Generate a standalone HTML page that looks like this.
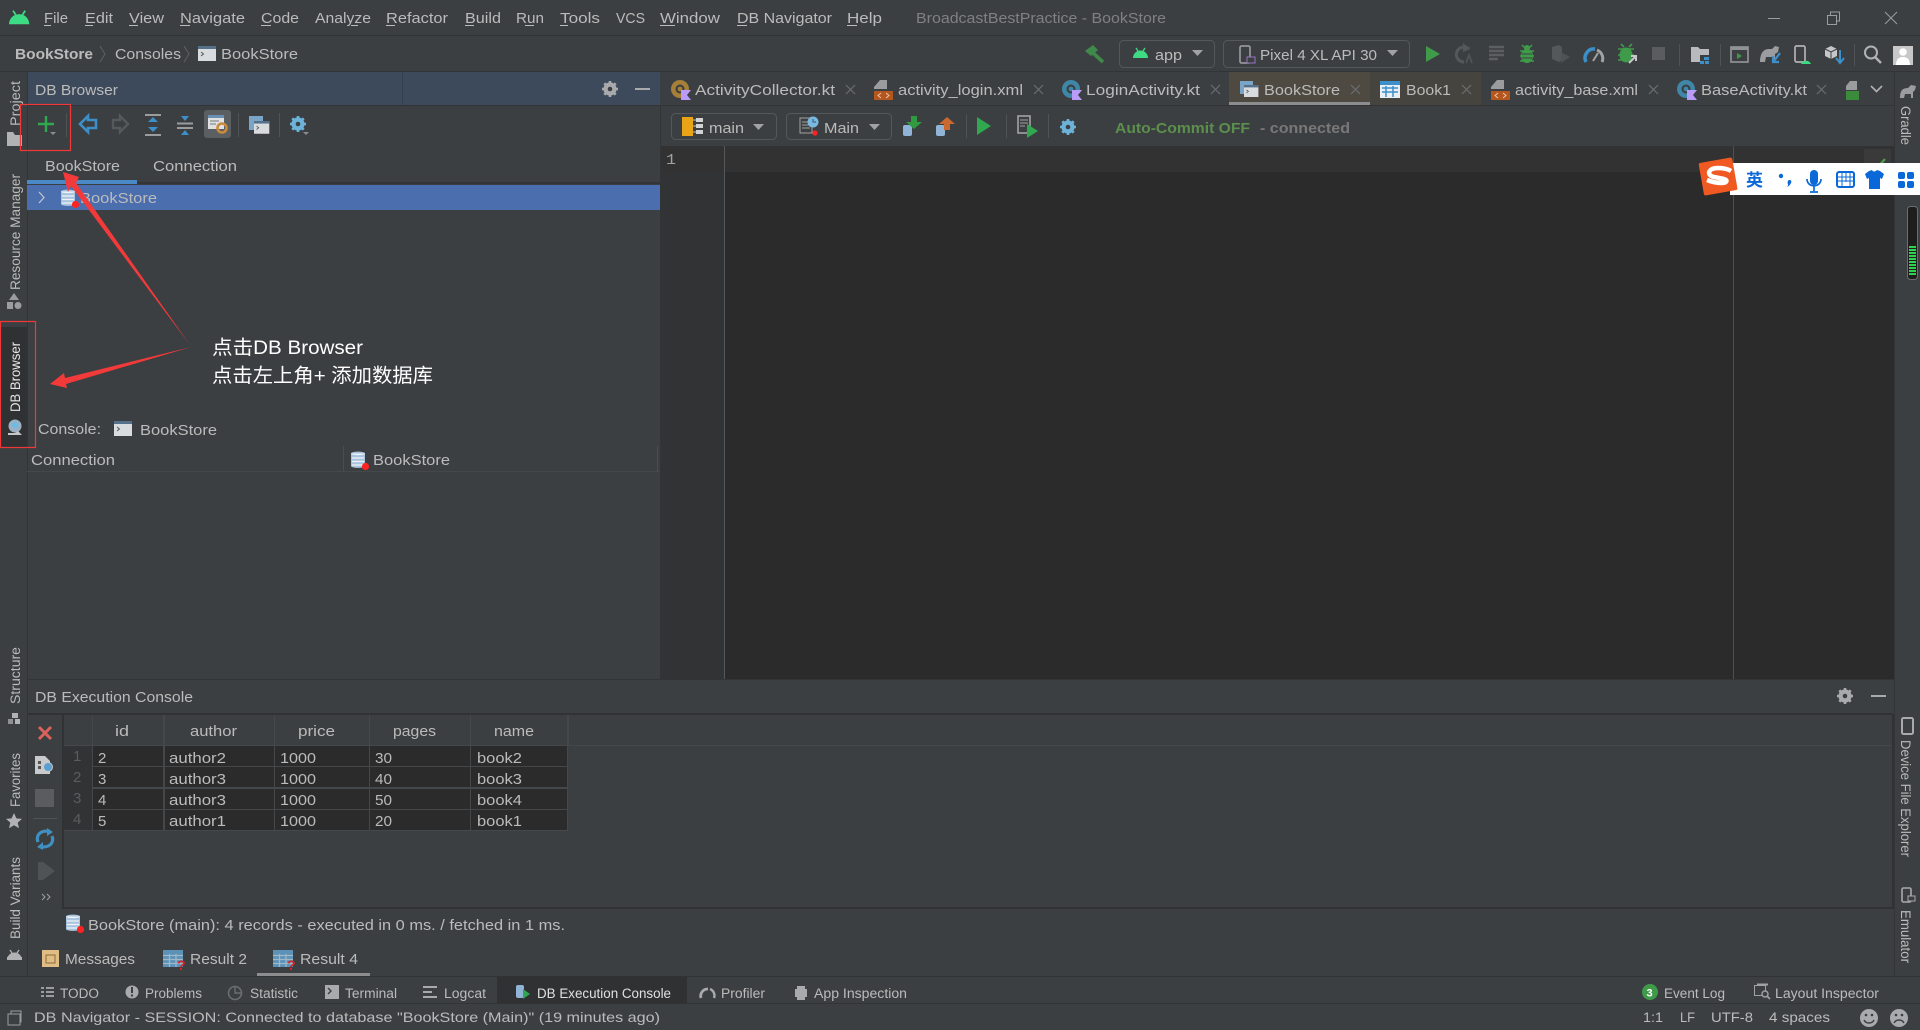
<!DOCTYPE html>
<html lang="zh">
<head>
<meta charset="utf-8">
<title>BroadcastBestPractice - BookStore</title>
<style>
html,body{margin:0;padding:0;background:#3c3f41;width:1920px;height:1030px;overflow:hidden}
svg{display:block}
text{font-family:"Liberation Sans","Noto Sans CJK SC",sans-serif;font-size:15px;fill:#bbbbbb}
.s{font-size:14px}
.b{font-size:13.5px}
.v{font-size:13.5px}
.m{font-size:15px;fill:#5a5d5f}
.dim{fill:#808080}
</style>
</head>
<body>
<svg width="1920" height="1030" viewBox="0 0 1920 1030" xmlns="http://www.w3.org/2000/svg">
<defs>
<g id="kt"><circle cx="9" cy="9" r="9"/><circle cx="9" cy="9" r="4.5" fill="#3c3f41"/><circle cx="9" cy="9" r="2.4" fill="currentColor"/><path d="M10 10h10l-4 5 4 5H10z" fill="#b99bf8"/></g>
<g id="xml"><path d="M6 0h7v9H0V7z" fill="#9a9c9e"/><rect x="0" y="11" width="19" height="9" fill="#b5561f"/><path d="M7 13l-3 2.5L7 18M12 13l3 2.5L12 18" fill="none" stroke="#e8c8a8" stroke-width="1"/></g>
<g id="db"><path d="M0 2.5C0 0 14 0 14 2.5V15c0 2.5-14 2.5-14 0z" fill="#a9c4de"/><path d="M0 2.5c0 2.2 14 2.2 14 0" fill="#eef4f9"/><path d="M1 7h12M1 10.5h12M1 14h12" stroke="#eef4f9" stroke-width="1.3"/><circle cx="14.5" cy="15.5" r="3.6" fill="#f22"/></g>
<g id="con"><rect x="0" y="0" width="18" height="15" fill="#d9dcdf"/><rect x="0" y="0" width="18" height="3" fill="#55708a"/><path d="M3 6l2.5 2L3 10" fill="none" stroke="#555" stroke-width="1"/></g>
<g id="x"><path d="M0 0l9 9M9 0L0 9" stroke="#6b6e70" stroke-width="1.2" fill="none"/></g>
<g id="android"><path d="M0 12a7.5 7.5 0 0 1 15 0z"/><path d="M3 2l2 3M12 2l-2 3" stroke="currentColor" stroke-width="1.3"/></g>
<g id="gear"><circle cx="8" cy="8" r="5" fill="none" stroke="currentColor" stroke-width="3.2"/><path d="M8 0v16M0 8h16M2.3 2.3l11.4 11.4M13.7 2.3L2.3 13.7" stroke="currentColor" stroke-width="2.6"/><circle cx="8" cy="8" r="2.3" fill="#3c3f41"/></g>
<g id="tbl"><rect width="20" height="17" fill="#5c92b8"/><path d="M0 5.5h20M0 9.5h20M0 13.5h20M6.5 4v13M13 4v13" stroke="#9fb8ca" stroke-width="1.2"/></g>
</defs>

<rect width="1920" height="1030" fill="#3c3f41"/>

<!-- title bar -->
<rect y="35" width="1920" height="1" fill="#323436"/>
<g fill="#3ddc84" color="#3ddc84" transform="translate(9,8) scale(1.35)"><use href="#android"/></g>
<text x="44" y="23" textLength="24" lengthAdjust="spacingAndGlyphs">File</text>
<text x="85" y="23" textLength="28" lengthAdjust="spacingAndGlyphs">Edit</text>
<text x="129" y="23" textLength="35" lengthAdjust="spacingAndGlyphs">View</text>
<text x="180" y="23" textLength="65" lengthAdjust="spacingAndGlyphs">Navigate</text>
<text x="261" y="23" textLength="38" lengthAdjust="spacingAndGlyphs">Code</text>
<text x="315" y="23" textLength="56" lengthAdjust="spacingAndGlyphs">Analyze</text>
<text x="386" y="23" textLength="62" lengthAdjust="spacingAndGlyphs">Refactor</text>
<text x="465" y="23" textLength="36" lengthAdjust="spacingAndGlyphs">Build</text>
<text x="516" y="23" textLength="28" lengthAdjust="spacingAndGlyphs">Run</text>
<text x="560" y="23" textLength="40" lengthAdjust="spacingAndGlyphs">Tools</text>
<text x="616" y="23" textLength="29" lengthAdjust="spacingAndGlyphs">VCS</text>
<text x="660" y="23" textLength="60" lengthAdjust="spacingAndGlyphs">Window</text>
<text x="737" y="23" textLength="95" lengthAdjust="spacingAndGlyphs">DB Navigator</text>
<text x="847" y="23" textLength="35" lengthAdjust="spacingAndGlyphs">Help</text>
<g fill="#bbbbbb">
<rect x="44" y="25" width="7" height="1"/><rect x="85" y="25" width="8" height="1"/><rect x="129" y="25" width="9" height="1"/><rect x="180" y="25" width="10" height="1"/><rect x="261" y="25" width="10" height="1"/><rect x="351" y="25" width="7" height="1"/><rect x="386" y="25" width="9" height="1"/><rect x="465" y="25" width="9" height="1"/><rect x="525" y="25" width="9" height="1"/><rect x="560" y="25" width="8" height="1"/><rect x="660" y="25" width="15" height="1"/><rect x="737" y="25" width="10" height="1"/><rect x="847" y="25" width="10" height="1"/>
</g>
<text class="dim" x="916" y="23" textLength="250" lengthAdjust="spacingAndGlyphs">BroadcastBestPractice - BookStore</text>
<g stroke="#9a9c9e" fill="none" stroke-width="1">
<path d="M1768 18.5h12"/>
<path d="M1827.5 15.5h9v9h-9zM1830.5 15v-3h9v9h-3"/>
<path d="M1885 12l12 12M1897 12l-12 12"/>
</g>

<!-- breadcrumb / main toolbar -->
<rect y="71" width="1920" height="1" fill="#323436"/>
<text x="15" y="59" textLength="78" lengthAdjust="spacingAndGlyphs" style="font-weight:bold">BookStore</text>
<path d="M100 46l5 8-5 8" fill="none" stroke="#5e6163"/>
<text x="115" y="59" textLength="66" lengthAdjust="spacingAndGlyphs">Consoles</text>
<path d="M184 46l5 8-5 8" fill="none" stroke="#5e6163"/>
<use href="#con" x="198" y="46"/>
<text x="221" y="59" textLength="77" lengthAdjust="spacingAndGlyphs">BookStore</text>

<path d="M1085 51l8-6 5 5-7 6z" fill="#3f8a4a"/><path d="M1092 52l11 10" stroke="#3f8a4a" stroke-width="3.6"/>
<rect x="1119.5" y="40.5" width="95" height="27" rx="4" fill="none" stroke="#55585a"/>
<g fill="#3ddc84" color="#3ddc84"><use href="#android" x="1133" y="46"/></g>
<text x="1155" y="60" textLength="27" lengthAdjust="spacingAndGlyphs">app</text>
<path d="M1192 50h11l-5.5 6z" fill="#a0a2a4"/>
<rect x="1223.5" y="40.5" width="186" height="27" rx="4" fill="none" stroke="#55585a"/>
<rect x="1240" y="46" width="10" height="17" rx="1.5" fill="none" stroke="#a0a2a4" stroke-width="1.5"/>
<rect x="1247" y="57" width="8" height="6" fill="#3c3f41" stroke="#9876c2"/>
<text x="1260" y="60" textLength="117" lengthAdjust="spacingAndGlyphs">Pixel 4 XL API 30</text>
<path d="M1387 50h11l-5.5 6z" fill="#a0a2a4"/>
<path d="M1426 46l14 8-14 8z" fill="#3f9b4a"/>
<path d="M1469 49a7.5 7.5 0 1 0-5 13" fill="none" stroke="#55585a" stroke-width="3"/><path d="M1463 43l7 6-7 3z" fill="#55585a"/><path d="M1466 63l3-8 3 8" fill="none" stroke="#55585a" stroke-width="1.5"/>
<path d="M1489 47h15M1489 51h15M1489 55h15M1489 59h9" stroke="#5c5f61" stroke-width="2.4"/>
<ellipse cx="1527" cy="56" rx="6" ry="7" fill="#3f9b4a"/><circle cx="1527" cy="48" r="3" fill="#3f9b4a"/><path d="M1520 51h14M1520 56h14M1520 61h14M1522 45l3 3M1532 45l-3 3" stroke="#3f9b4a" stroke-width="1.5"/><path d="M1522 54h10M1522 58h10" stroke="#3c3f41"/>
<path d="M1552 47l7-2 3 2v13l-3 2-7-3z" fill="#55585a"/><path d="M1561 52l9 5-9 6z" fill="#4f5254"/>
<path d="M1586 62a9 9 0 0 1 9-13" fill="none" stroke="#3c8fc9" stroke-width="3.5"/><path d="M1597 50a9 9 0 0 1 5 12" fill="none" stroke="#a0a2a4" stroke-width="3"/><path d="M1593 61l5-8" stroke="#a0a2a4" stroke-width="2"/>
<ellipse cx="1626" cy="55" rx="6.5" ry="7.5" fill="#3f9b4a"/><path d="M1618 49h16M1618 55h16M1618 60h10M1621 44l3 3M1632 44l-3 3" stroke="#3f9b4a" stroke-width="1.6"/><path d="M1629 63l7-7M1631 56h5v5" stroke="#c4c6c8" stroke-width="2" fill="none"/>
<rect x="1652" y="47" width="13" height="13" fill="#5a5c5e"/>
<rect x="1679" y="44" width="1" height="22" fill="#505355"/>
<path d="M1691 47h7l2 2h9v13h-18z" fill="#b8babc"/><rect x="1700" y="55" width="9" height="9" fill="#3c3f41"/><path d="M1704 57h5v3h-5zM1700 61h4v3h-4zM1705 61h4v3h-4z" fill="#3c8fc9"/>
<rect x="1720" y="44" width="1" height="22" fill="#505355"/>
<rect x="1731" y="47" width="17" height="15" fill="none" stroke="#909294" stroke-width="1.7"/><rect x="1731" y="47" width="17" height="3" fill="#909294"/><path d="M1737 53l5 3-5 3z" fill="#3f9b4a"/>
<path d="M1760 62c0-8 3-13 9-13l3 0 3-3 4 1-1 5-3 2v8h-3v-5h-6l-1 5z" fill="#9a9c9e"/><path d="M1780 53l-6 8M1773 56v6h6" stroke="#3c8fc9" stroke-width="2.2" fill="none"/>
<rect x="1795" y="46" width="10" height="16" rx="1.5" fill="none" stroke="#b0b2b4" stroke-width="1.7"/><path d="M1801 64a5.5 5.5 0 0 1 10 0z" fill="#3ddc84"/>
<path d="M1825 49l6-3 6 3v7l-6 3-6-3z" fill="#c4c6c8"/><path d="M1831 52v7M1825 49l6 3 6-3" stroke="#3c3f41" fill="none"/><path d="M1840 50v12M1836 58l4 5 4-5" stroke="#3c8fc9" stroke-width="2" fill="none"/>
<rect x="1854" y="44" width="1" height="22" fill="#505355"/>
<circle cx="1871" cy="52.5" r="6" fill="none" stroke="#b0b2b4" stroke-width="2"/><path d="M1875 57l6 6" stroke="#b0b2b4" stroke-width="2.4"/>
<rect x="1893" y="46" width="20" height="19" fill="#c8c8c8"/><circle cx="1903" cy="52" r="3.8" fill="#fff"/><path d="M1896 65c0-6 3-8 7-8s7 2 7 8z" fill="#fff"/>

<!-- left strip -->
<rect x="27" y="72" width="1" height="905" fill="#323436"/>
<g class="v">
<text class="v" transform="translate(20,126) rotate(-90)" textLength="45" lengthAdjust="spacingAndGlyphs">Project</text>
<text class="v" transform="translate(20,290) rotate(-90)" textLength="116" lengthAdjust="spacingAndGlyphs">Resource Manager</text>
<text class="v" transform="translate(20,704) rotate(-90)" textLength="57" lengthAdjust="spacingAndGlyphs">Structure</text>
<text class="v" transform="translate(20,807) rotate(-90)" textLength="54" lengthAdjust="spacingAndGlyphs">Favorites</text>
<text class="v" transform="translate(20,939) rotate(-90)" textLength="82" lengthAdjust="spacingAndGlyphs">Build Variants</text>
</g>
<path d="M7 132h6l2 3h7v11H7z" fill="#b0b2b4"/>
<path d="M14 293l5 7H9zM7 302h6v7H7z" fill="#9a9c9e"/><circle cx="18" cy="305.5" r="3.5" fill="#9a9c9e"/>
<rect x="0" y="327" width="27" height="121" fill="#2f3133"/>
<text class="v" transform="translate(20,412) rotate(-90)" textLength="70" lengthAdjust="spacingAndGlyphs" style="fill:#e6e6e6">DB Browser</text>
<circle cx="15" cy="426" r="6.5" fill="#9ab0c4"/><circle cx="15" cy="425" r="2.6" fill="#5fc0f0"/><path d="M8 433h7l3-2 4 4H8z" fill="#c4c6c8"/>
<rect x="12" y="713" width="6" height="5" fill="#b0b2b4"/><rect x="8" y="719" width="5" height="5" fill="#8e9092"/><rect x="15" y="719" width="5" height="5" fill="#b0b2b4"/>
<path d="M14 813l2.4 5.4 5.6.5-4.3 3.7 1.3 5.6-5-3-5 3 1.3-5.6L6 818.9l5.6-.5z" fill="#b0b2b4"/>
<g fill="#b0b2b4" color="#b0b2b4"><use href="#android" x="7" y="948"/><rect x="7" y="957" width="15" height="3"/></g>

<!-- DB Browser header -->
<rect x="28" y="72" width="632" height="33" fill="#3d4a5b"/>
<rect x="402" y="72" width="1" height="33" fill="#36414f"/>
<rect x="28" y="105" width="632" height="1" fill="#323436"/>
<text x="35" y="95" textLength="83" lengthAdjust="spacingAndGlyphs">DB Browser</text>
<g color="#a8aaac"><use href="#gear" x="602" y="81"/></g>
<rect x="635" y="88" width="15" height="2" fill="#a8aaac"/>

<!-- DB Browser toolbar -->
<path d="M46 116v16M38 124h16" stroke="#2fa84f" stroke-width="2.4"/>
<path d="M50 132h6l-3 3z" fill="#8a8c8e"/>
<rect x="66" y="113" width="1" height="24" fill="#505355"/>
<path d="M80 124l8-8v4h8v8h-8v4z" fill="none" stroke="#3c8fc9" stroke-width="2.6"/>
<path d="M128 124l-8-8v4h-7v8h7v4z" fill="none" stroke="#56595b" stroke-width="2.4"/>
<path d="M145 115h16M145 135h16" stroke="#9a9c9e" stroke-width="2"/><path d="M148 122l5-5 5 5zM148 127l5 5 5-5z" fill="#3c8fc9"/>
<path d="M177 123.5h16M177 128h16" stroke="#9a9c9e" stroke-width="2"/><path d="M181 116l4 5 4-5zM181 135l4-5 4 5z" fill="#3c8fc9"/>
<rect x="204" y="110" width="27" height="28" rx="3" fill="#5c5f61"/>
<rect x="208" y="115" width="16" height="14" fill="#dfe1e3"/><rect x="208" y="115" width="16" height="3" fill="#6a8fb0"/><path d="M210 121h9M210 124h6" stroke="#777"/>
<circle cx="222" cy="128" r="4.5" fill="none" stroke="#c98a3c" stroke-width="2.6"/>
<rect x="238" y="113" width="1" height="24" fill="#505355"/>
<rect x="249" y="116" width="14" height="14" fill="#7aa5c6"/><g transform="translate(254,121) scale(.85)"><use href="#con"/></g>
<rect x="279" y="113" width="1" height="24" fill="#505355"/>
<g color="#6db3d9"><use href="#gear" x="290" y="116"/></g>
<path d="M303 132h6l-3 3z" fill="#8a8c8e"/>

<!-- DB Browser tabs -->
<text x="45" y="171" textLength="75" lengthAdjust="spacingAndGlyphs">BookStore</text>
<text x="153" y="171" textLength="84" lengthAdjust="spacingAndGlyphs">Connection</text>
<rect x="27" y="182" width="633" height="2" fill="#323436"/>
<rect x="27" y="180" width="110" height="4" fill="#4a88c7"/>
<rect x="27" y="185" width="633" height="25" fill="#4b6eaf"/>
<path d="M39 192l5 5.5-5 5.5" fill="none" stroke="#c4c6c8" stroke-width="1.2"/>
<use href="#db" x="61" y="189"/>
<text x="80" y="203" textLength="77" lengthAdjust="spacingAndGlyphs">BookStore</text>

<!-- annotation text -->
<text x="212" y="354" textLength="151" lengthAdjust="spacingAndGlyphs" style="font-size:19.5px;fill:#ffffff">点击DB Browser</text>
<text x="212" y="382" textLength="221" lengthAdjust="spacingAndGlyphs" style="font-size:19.5px;fill:#ffffff">点击左上角+ 添加数据库</text>

<!-- Console rows -->
<text x="38" y="434" textLength="63" lengthAdjust="spacingAndGlyphs">Console:</text>
<use href="#con" x="114" y="421"/>
<text x="140" y="435" textLength="77" lengthAdjust="spacingAndGlyphs">BookStore</text>
<rect x="27" y="471" width="633" height="1" fill="#45484a"/>
<rect x="343" y="446" width="1" height="25" fill="#4a4d4f"/>
<rect x="657" y="446" width="1" height="25" fill="#4a4d4f"/>
<text x="31" y="465" textLength="84" lengthAdjust="spacingAndGlyphs">Connection</text>
<use href="#db" x="351" y="451"/>
<text x="373" y="465" textLength="77" lengthAdjust="spacingAndGlyphs">BookStore</text>

<!-- Editor tabs -->
<rect x="660" y="72" width="1234" height="33" fill="#3c3f41"/>
<rect x="1229" y="72" width="141" height="30" fill="#4e4a42"/>
<rect x="1229" y="102" width="141" height="3" fill="#8b8d8f"/>
<rect x="1370" y="72" width="111" height="33" fill="#45443f"/>
<rect x="660" y="105" width="1234" height="1" fill="#323436"/>
<g fill="#a67f39" color="#a67f39"><use href="#kt" x="671" y="80"/></g>
<text x="695" y="95" textLength="140" lengthAdjust="spacingAndGlyphs">ActivityCollector.kt</text>
<use href="#x" x="846" y="85"/>
<use href="#xml" x="874" y="80"/>
<text x="898" y="95" textLength="125" lengthAdjust="spacingAndGlyphs">activity_login.xml</text>
<use href="#x" x="1034" y="85"/>
<g fill="#3f86a8" color="#3f86a8"><use href="#kt" x="1062" y="80"/></g>
<text x="1086" y="95" textLength="114" lengthAdjust="spacingAndGlyphs">LoginActivity.kt</text>
<use href="#x" x="1211" y="85"/>
<rect x="1240" y="81" width="13" height="13" fill="#7aa5c6"/><g transform="translate(1244,85) scale(.8)"><use href="#con"/></g>
<text x="1264" y="95" textLength="76" lengthAdjust="spacingAndGlyphs">BookStore</text>
<use href="#x" x="1351" y="85"/>
<rect x="1380" y="81" width="20" height="17" fill="#e8eef4"/><rect x="1380" y="81" width="20" height="4" fill="#3c8fc9"/><path d="M1382 88h16M1382 92h16M1386 86v11M1393 86v11" stroke="#3c8fc9" stroke-width="1.5"/>
<text x="1406" y="95" textLength="45" lengthAdjust="spacingAndGlyphs">Book1</text>
<use href="#x" x="1462" y="85"/>
<use href="#xml" x="1491" y="80"/>
<text x="1515" y="95" textLength="123" lengthAdjust="spacingAndGlyphs">activity_base.xml</text>
<use href="#x" x="1649" y="85"/>
<g fill="#3f86a8" color="#3f86a8"><use href="#kt" x="1677" y="80"/></g>
<text x="1701" y="95" textLength="106" lengthAdjust="spacingAndGlyphs">BaseActivity.kt</text>
<use href="#x" x="1817" y="85"/>
<path d="M1850 81h7v9h-11v-4z" fill="#9a9c9e"/><rect x="1846" y="91" width="13" height="9" fill="#3c8a3c"/>
<path d="M1871 86l5.5 5.5 5.5-5.5" fill="none" stroke="#b0b2b4" stroke-width="1.6"/>

<!-- Editor toolbar -->
<rect x="671.5" y="113.5" width="105" height="26" rx="4" fill="none" stroke="#55585a"/>
<rect x="682" y="117" width="11" height="19" fill="#e8a317"/><path d="M693 120h4M693 126h4M693 132h4" stroke="#c4c6c8"/><rect x="696" y="118" width="7" height="4" fill="#d0d2d4"/><rect x="696" y="124" width="7" height="4" fill="#d0d2d4"/><rect x="696" y="130" width="7" height="4" fill="#d0d2d4"/>
<text x="709" y="133" textLength="35" lengthAdjust="spacingAndGlyphs">main</text>
<path d="M753 124h11l-5.5 6z" fill="#a0a2a4"/>
<rect x="786.5" y="113.5" width="105" height="26" rx="4" fill="none" stroke="#55585a"/>
<rect x="800" y="118" width="12" height="15" fill="none" stroke="#a0a2a4"/><path d="M802 122h8M802 125h8M802 128h8" stroke="#a0a2a4"/><circle cx="813" cy="122" r="5.5" fill="#7ab8e0"/><path d="M813 119v3h3" stroke="#2c5a7a" fill="none"/><circle cx="815" cy="133" r="2.6" fill="#f22"/>
<text x="824" y="133" textLength="35" lengthAdjust="spacingAndGlyphs">Main</text>
<path d="M869 124h11l-5.5 6z" fill="#a0a2a4"/>
<rect x="903" y="125" width="9" height="11" rx="2" fill="#8fb4d6"/><path d="M911 116h6v6h5l-8 7-8-7h5z" fill="#2f9a3f"/>
<rect x="936" y="125" width="9" height="11" rx="2" fill="#8fb4d6"/><path d="M944 130v-6h-5l8-7 8 7h-5v6z" fill="#c9692f"/>
<rect x="966" y="114" width="1" height="24" fill="#505355"/>
<path d="M977 117l14 9-14 9z" fill="#2fa84f"/>
<rect x="1006" y="114" width="1" height="24" fill="#505355"/>
<rect x="1018" y="116" width="12" height="17" fill="none" stroke="#a0a2a4" stroke-width="1.6"/><path d="M1020 120h8M1020 123h8M1020 126h5" stroke="#a0a2a4"/><path d="M1027 124l11 7-11 7z" fill="#2fa84f"/>
<rect x="1048" y="114" width="1" height="24" fill="#505355"/>
<g color="#6db3d9"><use href="#gear" x="1060" y="119"/></g>
<text x="1115" y="133" textLength="135" lengthAdjust="spacingAndGlyphs" style="font-weight:bold;fill:#5b8f4c">Auto-Commit OFF</text>
<text x="1260" y="133" textLength="90" lengthAdjust="spacingAndGlyphs" style="font-weight:bold;fill:#787878">- connected</text>

<!-- Editor -->
<rect x="660" y="146" width="1234" height="534" fill="#2b2b2b"/>
<rect x="660" y="146" width="64" height="534" fill="#313335"/>
<rect x="660" y="146" width="1234" height="26" fill="#323232"/>
<rect x="724" y="146" width="1" height="534" fill="#55585a"/>
<rect x="1733" y="146" width="1" height="534" fill="#4e5052"/>
<text x="666" y="164" textLength="10" lengthAdjust="spacingAndGlyphs" style="fill:#a0a2a4;font-family:'Liberation Mono',monospace">1</text>
<rect x="1864" y="149" width="27" height="16" fill="#3a3a3a"/>
<path d="M1872 164l5 4 8-9" fill="none" stroke="#4a9b4a" stroke-width="2.4"/>

<!-- panel left border -->
<rect x="660" y="106" width="1" height="574" fill="#323436"/>

<!-- right strip -->
<rect x="1894" y="72" width="1" height="905" fill="#323436"/>
<path d="M1900 98c0-7 2-10 8-10l3-3 5 1-1 4-2 2v6h-2v-4h-6l-1 4z" fill="#9a9c9e"/>
<text class="v" transform="translate(1901,106) rotate(90)" textLength="39" lengthAdjust="spacingAndGlyphs">Gradle</text>
<rect x="1902" y="718" width="11" height="16" rx="1.5" fill="none" stroke="#a8aaac" stroke-width="2"/>
<text class="v" transform="translate(1901,740) rotate(90)" textLength="117" lengthAdjust="spacingAndGlyphs">Device File Explorer</text>
<rect x="1902" y="888" width="9" height="14" rx="1.5" fill="none" stroke="#a8aaac" stroke-width="1.6"/><rect x="1908" y="896" width="7" height="5" fill="#3c3f41" stroke="#a8aaac"/>
<text class="v" transform="translate(1901,910) rotate(90)" textLength="53" lengthAdjust="spacingAndGlyphs">Emulator</text>

<!-- Sogou IME -->
<rect x="1730" y="163" width="190" height="32" fill="#ffffff"/>
<g transform="rotate(-10 1718 176)"><rect x="1701" y="160" width="34" height="33" rx="2" fill="#f05a22"/></g>
<path d="M1731 171c-5-3-14-4-19-2-5 3-3 7 2 8l10 2c4 1 3 4-2 4-5 0-10-1-15-3" fill="none" stroke="#ffffff" stroke-width="4.5"/>
<text x="1746" y="186" style="font-size:17px;fill:#0a68d8;font-weight:bold">英</text>
<circle cx="1781" cy="176" r="2.2" fill="#0a68d8"/><path d="M1789 180c2 0 3 1 2 3-1 2-2 3-4 4 1-1 1-2 1-3-1-1 0-4 1-4z" fill="#0a68d8"/>
<rect x="1810" y="170" width="8" height="15" rx="4" fill="#0a68d8"/><path d="M1807 179c0 9 14 9 14 0M1814 186v5M1810 192h8" fill="none" stroke="#0a68d8" stroke-width="1.7"/>
<rect x="1837" y="172" width="17" height="15" rx="2" fill="none" stroke="#0a68d8" stroke-width="2"/><path d="M1838 177h15M1838 181h15M1842 173v13M1846 173v9M1850 173v13" stroke="#0a68d8"/>
<path d="M1869 171l3-1c1 2 3 2 5 0l3 1 4 3-2 5-2-1v11h-11v-11l-2 1-2-5z" fill="#0a68d8"/>
<rect x="1898" y="172" width="7" height="7" rx="2" fill="#0a68d8"/><rect x="1907" y="172" width="7" height="7" rx="2" fill="#0a68d8"/><rect x="1898" y="181" width="7" height="7" rx="2" fill="#0a68d8"/><rect x="1907" y="181" width="7" height="7" rx="2" fill="#0a68d8"/>
<rect x="1907.5" y="206.5" width="10" height="73" rx="3" fill="#1e1e1e" stroke="#6b6e70"/>
<g fill="#2fd24f"><rect x="1909" y="246" width="7" height="2"/><rect x="1909" y="249" width="7" height="2"/><rect x="1909" y="252" width="7" height="2"/><rect x="1909" y="255" width="7" height="2"/><rect x="1909" y="258" width="7" height="2"/><rect x="1909" y="261" width="7" height="2"/><rect x="1909" y="264" width="7" height="2"/><rect x="1909" y="267" width="7" height="2"/><rect x="1909" y="270" width="7" height="2"/><rect x="1909" y="273" width="7" height="2"/></g>

<!-- bottom panel -->
<rect x="28" y="679" width="1866" height="1" fill="#323436"/>
<rect x="28" y="713" width="1864" height="2" fill="#303234"/>
<text x="35" y="702" textLength="158" lengthAdjust="spacingAndGlyphs">DB Execution Console</text>
<g color="#a8aaac"><use href="#gear" x="1837" y="688"/></g>
<rect x="1871" y="695" width="15" height="2" fill="#a8aaac"/>
<rect x="62" y="714" width="2" height="194" fill="#303234"/>
<rect x="1892" y="714" width="2" height="194" fill="#303234"/>
<rect x="62" y="907" width="1832" height="2" fill="#303234"/>

<!-- console side toolbar -->
<path d="M39 727l12 12M51 727l-12 12" stroke="#d9635a" stroke-width="3"/>
<path d="M35 756h10l5 5v13H35z" fill="#c8cacc"/><path d="M38 761h3v3h-3zM38 766h3v3h-3z" fill="#555"/><circle cx="48" cy="767" r="4.5" fill="#5a9fd0" stroke="#c8cacc"/>
<rect x="35" y="789" width="19" height="18" fill="#5a5c5e"/>
<rect x="33" y="818" width="24" height="1" fill="#505355"/>
<path d="M38 842c-3-8 5-13 12-10M52 836c3 8-5 13-12 10" fill="none" stroke="#3f8fc0" stroke-width="3.2"/><path d="M47 828l6 4-6 4zM43 842l-6 5 6 3z" fill="#3f8fc0"/>
<path d="M38 862h5l12 9-12 9h-5z" fill="#505355"/>
<path d="M42 894l3 3-3 3M47 894l3 3-3 3" fill="none" stroke="#a0a2a4"/>

<!-- results table -->
<rect x="64" y="745" width="1828" height="1" fill="#45484a"/>
<rect x="64" y="746" width="28" height="85" fill="#313335"/>
<rect x="92" y="715" width="1" height="30" fill="#45484a"/>
<rect x="163" y="715" width="2" height="30" fill="#45484a"/>
<rect x="274" y="715" width="1" height="30" fill="#45484a"/>
<rect x="369" y="715" width="1" height="30" fill="#45484a"/>
<rect x="470" y="715" width="1" height="30" fill="#45484a"/>
<rect x="567" y="715" width="2" height="30" fill="#45484a"/>
<rect x="92" y="746" width="476" height="85" fill="#2b2b2b"/>
<g fill="#45484a">
<rect x="92" y="746" width="1" height="85"/><rect x="163" y="746" width="2" height="85"/><rect x="274" y="746" width="1" height="85"/><rect x="369" y="746" width="1" height="85"/><rect x="470" y="746" width="1" height="85"/><rect x="567" y="746" width="1" height="85"/>
<rect x="92" y="766" width="476" height="1"/><rect x="92" y="787" width="476" height="2"/><rect x="92" y="809" width="476" height="1"/><rect x="64" y="830" width="504" height="1"/>
</g>
<text x="115" y="736" textLength="14" lengthAdjust="spacingAndGlyphs">id</text>
<text x="190" y="736" textLength="47" lengthAdjust="spacingAndGlyphs">author</text>
<text x="298" y="736" textLength="37" lengthAdjust="spacingAndGlyphs">price</text>
<text x="393" y="736" textLength="43" lengthAdjust="spacingAndGlyphs">pages</text>
<text x="494" y="736" textLength="40" lengthAdjust="spacingAndGlyphs">name</text>
<g>
<text class="m" x="73" y="761">1</text><text class="m" x="73" y="782">2</text><text class="m" x="73" y="803">3</text><text class="m" x="73" y="824">4</text>
<text x="98" y="763">2</text><text x="169" y="763" textLength="57" lengthAdjust="spacingAndGlyphs">author2</text><text x="280" y="763" textLength="36" lengthAdjust="spacingAndGlyphs">1000</text><text x="375" y="763" textLength="17" lengthAdjust="spacingAndGlyphs">30</text><text x="477" y="763" textLength="45" lengthAdjust="spacingAndGlyphs">book2</text>
<text x="98" y="784">3</text><text x="169" y="784" textLength="57" lengthAdjust="spacingAndGlyphs">author3</text><text x="280" y="784" textLength="36" lengthAdjust="spacingAndGlyphs">1000</text><text x="375" y="784" textLength="17" lengthAdjust="spacingAndGlyphs">40</text><text x="477" y="784" textLength="45" lengthAdjust="spacingAndGlyphs">book3</text>
<text x="98" y="805">4</text><text x="169" y="805" textLength="57" lengthAdjust="spacingAndGlyphs">author3</text><text x="280" y="805" textLength="36" lengthAdjust="spacingAndGlyphs">1000</text><text x="375" y="805" textLength="17" lengthAdjust="spacingAndGlyphs">50</text><text x="477" y="805" textLength="45" lengthAdjust="spacingAndGlyphs">book4</text>
<text x="98" y="826">5</text><text x="169" y="826" textLength="57" lengthAdjust="spacingAndGlyphs">author1</text><text x="280" y="826" textLength="36" lengthAdjust="spacingAndGlyphs">1000</text><text x="375" y="826" textLength="17" lengthAdjust="spacingAndGlyphs">20</text><text x="477" y="826" textLength="45" lengthAdjust="spacingAndGlyphs">book1</text>
</g>

<!-- status message -->
<use href="#db" x="66" y="914"/>
<text x="88" y="930" textLength="477" lengthAdjust="spacingAndGlyphs">BookStore (main): 4 records  - executed in 0 ms. / fetched in 1 ms.</text>
<rect x="42" y="950" width="17" height="17" fill="#e0bd84"/><rect x="46" y="955" width="9" height="8" fill="none" stroke="#8a6a3a"/>
<text x="65" y="964" textLength="70" lengthAdjust="spacingAndGlyphs">Messages</text>
<use href="#tbl" x="163" y="950"/><text x="177" y="970" style="font-size:14px;fill:#e02020;font-weight:bold">?</text>
<text x="190" y="964" textLength="57" lengthAdjust="spacingAndGlyphs">Result 2</text>
<use href="#tbl" x="273" y="950"/><text x="287" y="970" style="font-size:14px;fill:#e02020;font-weight:bold">?</text>
<text x="300" y="964" textLength="58" lengthAdjust="spacingAndGlyphs">Result 4</text>
<rect x="257" y="973" width="113" height="3" fill="#8b8d8f"/>

<!-- bottom tool bar -->
<rect y="976" width="1920" height="1" fill="#303234"/>
<rect x="497" y="977" width="190" height="27" fill="#2f3133"/>
<rect y="1003" width="497" height="1" fill="#323436"/><rect x="687" y="1003" width="1233" height="1" fill="#323436"/>
<path d="M41 988h3M46 988h8M41 992h3M46 992h8M41 996h3M46 996h8" stroke="#a8aaac" stroke-width="1.8"/>
<text class="b" x="60" y="998" textLength="39" lengthAdjust="spacingAndGlyphs">TODO</text>
<circle cx="132" cy="992" r="6.5" fill="#a8aaac"/><rect x="131" y="987" width="2" height="6" fill="#3c3f41"/><rect x="131" y="994.5" width="2" height="2" fill="#3c3f41"/>
<text class="b" x="145" y="998" textLength="57" lengthAdjust="spacingAndGlyphs">Problems</text>
<circle cx="235" cy="993" r="6.5" fill="none" stroke="#6b6e70" stroke-width="1.6"/><path d="M235 987v6h6" fill="none" stroke="#6b6e70" stroke-width="1.4"/>
<text class="b" x="250" y="998" textLength="48" lengthAdjust="spacingAndGlyphs">Statistic</text>
<rect x="325" y="985" width="14" height="14" fill="#a8aaac"/><path d="M328 988l3 3-3 3" fill="none" stroke="#3c3f41" stroke-width="1.4"/>
<text class="b" x="345" y="998" textLength="52" lengthAdjust="spacingAndGlyphs">Terminal</text>
<path d="M423 987h14M423 992h9M423 997h14" stroke="#a8aaac" stroke-width="2"/>
<text class="b" x="444" y="998" textLength="42" lengthAdjust="spacingAndGlyphs">Logcat</text>
<rect x="516" y="985" width="8" height="13" rx="2" fill="#8fb4d6"/><path d="M523 989l7 5-7 5z" fill="#2fa84f"/>
<text class="b" x="537" y="998" textLength="134" lengthAdjust="spacingAndGlyphs" style="fill:#e0e0e0">DB Execution Console</text>
<path d="M701 998a7 7 0 0 1 7-9" fill="none" stroke="#a8aaac" stroke-width="2.8"/><path d="M710 989a7 7 0 0 1 4 9" fill="none" stroke="#a8aaac" stroke-width="2.4"/>
<text class="b" x="721" y="998" textLength="44" lengthAdjust="spacingAndGlyphs">Profiler</text>
<path d="M797 986h8v3h2v8h-2v3h-8v-3h-2v-8h2z" fill="#a8aaac"/>
<text class="b" x="814" y="998" textLength="93" lengthAdjust="spacingAndGlyphs">App Inspection</text>
<circle cx="1650" cy="992" r="8" fill="#3f9b4a"/>
<text x="1646.5" y="996.5" style="font-size:11px;fill:#fff;font-weight:bold">3</text>
<text class="b" x="1664" y="998" textLength="61" lengthAdjust="spacingAndGlyphs">Event Log</text>
<rect x="1754.5" y="985.5" width="11" height="10" fill="none" stroke="#a0a2a4"/><rect x="1757" y="983.5" width="11" height="2" fill="#a0a2a4"/><circle cx="1765" cy="994" r="3" fill="#3c3f41" stroke="#a0a2a4" stroke-width="1.4"/><path d="M1767 996l3 3" stroke="#a0a2a4" stroke-width="1.6"/>
<text class="b" x="1775" y="998" textLength="104" lengthAdjust="spacingAndGlyphs">Layout Inspector</text>

<!-- status bar -->
<rect x="8" y="1014" width="12" height="11" fill="none" stroke="#9a9c9e"/><path d="M11 1014v-3h10v11h-1" fill="none" stroke="#9a9c9e"/>
<text class="s" x="34" y="1022" textLength="626" lengthAdjust="spacingAndGlyphs">DB Navigator  - SESSION: Connected to database "BookStore (Main)" (19 minutes ago)</text>
<text class="s" x="1643" y="1022" textLength="20" lengthAdjust="spacingAndGlyphs">1:1</text>
<text class="s" x="1680" y="1022" textLength="15" lengthAdjust="spacingAndGlyphs">LF</text>
<text class="s" x="1711" y="1022" textLength="42" lengthAdjust="spacingAndGlyphs">UTF-8</text>
<text class="s" x="1769" y="1022" textLength="61" lengthAdjust="spacingAndGlyphs">4 spaces</text>
<circle cx="1869" cy="1018" r="9" fill="#a8aaac"/><circle cx="1866" cy="1015" r="1.3" fill="#3c3f41"/><circle cx="1872" cy="1015" r="1.3" fill="#3c3f41"/><path d="M1864 1020c2 4 8 4 10 0" fill="none" stroke="#3c3f41" stroke-width="1.4"/>
<circle cx="1899" cy="1018" r="9" fill="#a8aaac"/><circle cx="1896" cy="1015" r="1.3" fill="#3c3f41"/><circle cx="1902" cy="1015" r="1.3" fill="#3c3f41"/><path d="M1894 1023c2-4 8-4 10 0" fill="none" stroke="#3c3f41" stroke-width="1.4"/>

<!-- annotations: red boxes and arrows -->
<rect x="20.5" y="104.5" width="50" height="46" fill="none" stroke="#f03838" stroke-width="1.2"/>
<rect x="0.5" y="321.5" width="35" height="126" fill="none" stroke="#f03838" stroke-width="1.2"/>
<polygon points="63,172 79,177 76,183 190,345 71,186 68,192" fill="#f33a3a"/>
<polygon points="50,384 64,373 65,378 191,347 66,384 67,388" fill="#f33a3a"/>
</svg>
</body>
</html>
